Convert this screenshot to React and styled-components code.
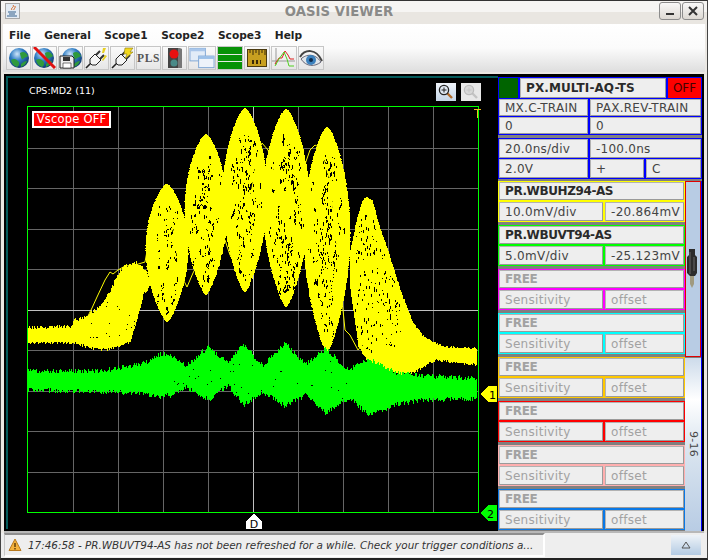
import React from 'react';
import styled, { createGlobalStyle } from 'styled-components';

const Global = createGlobalStyle`
  html, body { margin: 0; padding: 0; background: #2a2a2a; }
  * { box-sizing: border-box; }
  body { font-family: "DejaVu Sans", sans-serif; }
`;

/* ---------- waveform generation ---------- */
function rng(seed) {
  let a = seed;
  return () => {
    a |= 0; a = (a + 0x6d2b79f5) | 0;
    let t = Math.imul(a ^ (a >>> 15), 1 | a);
    t = (t + Math.imul(t ^ (t >>> 7), 61 | t)) ^ t;
    return ((t ^ (t >>> 14)) >>> 0) / 4294967296;
  };
}
const r = rng(4242);
const lerp = (pts, x) => {
  for (let i = 0; i < pts.length - 1; i++) {
    const [a, b] = [pts[i], pts[i + 1]];
    if (x >= a[0] && x <= b[0]) return a[1] + ((b[1] - a[1]) * (x - a[0])) / (b[0] - a[0] || 1);
  }
  return pts[pts.length - 1][1];
};
const lenses = [
  [167, 184, 322, 21, 34],
  [206, 134, 295, 21, 60],
  [245, 108, 292, 22, 75],
  [286, 109, 307, 23, 95],
  [327, 127, 352, 23, 95],
];
const lensWidth = (t, hw) => hw * Math.pow(Math.sin(Math.PI * Math.pow(t, 0.92)), 0.74);
let yellow = '';
let holes = '';
lenses.forEach(([cx, top, bottom, hw, n]) => {
  const H = bottom - top;
  for (let y = top; y < bottom; y++) {
    const t = (y - top + 0.5) / H;
    const w = lensWidth(t, hw);
    const l = Math.round(cx - w - r() * 0.8);
    const rr = Math.round(cx + w + r() * 0.8);
    yellow += `M${l} ${y + 0.5}H${rr}`;
  }
  for (let i = 0; i < n; i++) {
    const t = 0.12 + r() * 0.78;
    const w = lensWidth(t, hw);
    const s = (r() + r() - 1) * 0.85;
    const x = Math.round(cx + s * w);
    const y = Math.round(top + t * H);
    for (let j = 0; j < 3; j++) {
      holes += `M${x + Math.round((r() - 0.5) * 3) + 0.5} ${y + Math.round(r() * 9)}v${1 + Math.floor(r() * 3)}`;
    }
  }
});
const envelope = (tops, bottoms, x0, x1, jt, jb, rand) => {
  let d = '';
  for (let x = x0; x <= x1; x++) {
    const a = lerp(tops, x) + (rand() - 0.5) * jt;
    const b = lerp(bottoms, x) + (rand() - 0.5) * jb;
    d += `M${x + 0.5} ${Math.round(a)}V${Math.round(b)}`;
  }
  return d;
};
yellow += envelope(
  [[28, 328], [70, 326], [75, 320], [85, 317], [100, 307], [110, 290], [120, 270], [128, 264], [138, 263], [146, 270], [150, 285]],
  [[28, 343], [75, 343], [90, 348], [105, 350], [130, 342], [138, 315], [143, 295], [150, 285]],
  28, 150, 4, 3, r
);
yellow += envelope(
  [[350, 250], [357, 217], [362, 200], [367, 197], [372, 200], [378, 222], [393, 267], [400, 290], [413, 323], [422, 335], [432, 342], [445, 347], [476, 348]],
  [[350, 290], [358, 347], [370, 365], [400, 375], [415, 372], [425, 366], [435, 360], [476, 365]],
  350, 476, 2, 2.5, r
);
for (let i = 0; i < 170; i++) {
  const x = 355 + Math.round(r() * 45);
  const a = lerp([[350, 250], [362, 205], [372, 205], [393, 270], [413, 325]], x) + 8;
  const y = Math.round(a + r() * (350 - a));
  holes += `M${x + 0.5} ${y}v${1 + Math.floor(r() * 3)}`;
}
for (let i = 0; i < 26; i++) {
  const x = 90 + Math.round(r() * 45);
  const y = 300 + Math.round(r() * 40);
  if (x < 125 || y < 330) holes += `M${x + 0.5} ${y}v1`;
}
const gTop = [[28, 371], [100, 371], [140, 364], [150, 361], [160, 354], [172, 356], [185, 366], [208, 347], [228, 363], [243, 344], [262, 366], [285, 343], [305, 364], [325, 349], [349, 370], [368, 358], [395, 372], [420, 376], [476, 378]];
const gBot = [[28, 390], [100, 392], [140, 393], [160, 397], [172, 395], [185, 387], [208, 400], [228, 386], [243, 405], [262, 392], [285, 406], [305, 395], [325, 413], [349, 398], [368, 415], [395, 405], [420, 400], [476, 399]];
const green = envelope(gTop, gBot, 28, 476, 5, 5, r);
let greenHoles = '';
for (let i = 0; i < 40; i++) {
  const x = 170 + Math.round(r() * 180);
  const y = 360 + Math.round(r() * 40);
  greenHoles += `M${x + 0.5} ${y}v1`;
}
const trace = '87,318 92,308 97,297 105,280 110,272 113,274 118,270 125,266 135,265 145,262 150,235 155,217 160,210 168,205 175,240 180,273 187,287 193,273 205,250 225,240 230,255 235,262 245,230 258,152 262,143 268,150 280,190 303,170 310,150 315,145 320,148 330,180 345,330 350,335 358,350 375,330';

/* ---------- window chrome ---------- */
const Window = styled.div`
  width: 708px;
  height: 560px;
  display: flex;
  flex-direction: column;
  overflow: hidden;
  background: #ebe8e3;
  border-top: 1px solid #333;
  border-bottom: 2px solid #222;
  border-left: 1px solid #444;
  border-right: 1px solid #444;
`;
const TitleBar = styled.div`
  height: 23px;
  flex: none;
  display: flex;
  align-items: center;
  padding: 0 3px 3px 4px;
  background: linear-gradient(#f6f5f3 0 11px, #e9e6e1 11px);
`;
const JavaBadge = styled.div`
  width: 15px;
  height: 16px;
  flex: none;
  border: 1px solid #a9a9a9;
  background: #e4ecf4;
  display: flex;
  align-items: center;
  justify-content: center;
`;
const Title = styled.div`
  flex: 1;
  text-align: center;
  font: bold 13.2px "DejaVu Sans", sans-serif;
  letter-spacing: 0.1px;
  color: #8a8a88;
`;
const WinButton = styled.div`
  width: 22px;
  height: 18px;
  margin-left: 1px;
  flex: none;
  border: 1px solid #8c8c8c;
  border-radius: 3px;
  background: linear-gradient(#f8f8f8, #ddd9d3);
  display: flex;
  align-items: center;
  justify-content: center;
`;
const ChromeBand = styled.div`
  flex: none;
  margin: 0 2px;
  background: linear-gradient(#ffffff 0, #fbfbfb 24px, #dedede 48px);
`;
const MenuBar = styled.div`
  height: 22px;
  display: flex;
  align-items: center;
  gap: 13.5px;
  padding-left: 6px;
`;
const MenuItem = styled.span`
  font: bold 10.6px "DejaVu Sans", sans-serif;
  color: #222;
`;
const ToolBar = styled.div`
  height: 26px;
  display: flex;
  padding: 0 0 2px 2px;
  gap: 1px;
`;
const ToolButton = styled.div`
  width: ${(p) => p.$w || 25}px;
  height: 24px;
  flex: none;
  border: 1px solid #c6c6c6;
  background: linear-gradient(#fafafa, #e6e6e6);
  display: flex;
  align-items: center;
  justify-content: center;
`;
const PlsText = styled.span`
  font: bold 11.5px "Liberation Serif", serif;
  letter-spacing: 0.6px;
  color: #555;
`;
const BarsStack = styled.div`
  width: 100%;
  height: 100%;
  display: flex;
  flex-direction: column;
  gap: 1px;
  background: #e8e8e8;
`;
const GreenBar = styled.div`
  flex: 1;
  background: #079207;
`;

/* ---------- main area ---------- */
const Main = styled.div`
  flex: 1;
  min-height: 0;
  margin: 2px 3px 0;
  display: flex;
  background: #000;
  border-bottom: 2px solid #b8b8b8;
`;
const Scope = styled.div`
  width: 494px;
  flex: none;
  padding: 2px 0 2px 2px;
  background: #000;
`;
const ScopeFrame = styled.div`
  position: relative;
  height: 100%;
  border-top: 2px solid #045a5a;
  border-left: 2px solid #045a5a;
`;
const ScopeSvg = styled.svg`
  display: block;
  width: 490px;
  height: 453px;
`;
const ScopeLabel = styled.div`
  position: absolute;
  left: 21px;
  top: 7px;
  font: 9.5px "DejaVu Sans", sans-serif;
  color: #fff;
`;
const VscopeBadge = styled.div`
  position: absolute;
  left: 24px;
  top: 33px;
  width: 79px;
  height: 17px;
  border: 2px solid #fff;
  background: #f00;
  color: #fff;
  font: 11.5px "DejaVu Sans", sans-serif;
  letter-spacing: 0.2px;
  line-height: 13px;
  text-align: center;
  white-space: nowrap;
`;
const ZoomButton = styled.div`
  position: absolute;
  top: 5px;
  left: ${(p) => p.$x}px;
  width: 20px;
  height: 18px;
  background: ${(p) => (p.$off ? '#e8e8e8' : 'linear-gradient(#eef3f9, #c5d5e8)')};
  display: flex;
  align-items: center;
  justify-content: center;
`;

/* ---------- side panel ---------- */
const Side = styled.div`
  width: 206px;
  flex: none;
  padding: 3px 2px 0 0;
  background: #000;
  overflow: hidden;
  display: flex;
  flex-direction: column;
`;
const Stack = styled.div`
  flex: 1;
  min-height: 0;
  overflow: hidden;
  display: flex;
  flex-direction: column;
  background: #808080;
`;
const BlueGroup = styled.div`
  flex: none;
  display: flex;
  flex-direction: column;
  gap: 1px;
  padding: 1px;
  background: #0000ff;
  margin-bottom: ${(p) => p.$mb || 0}px;
`;
const Row = styled.div`
  display: flex;
  gap: ${(p) => p.$gap ?? 2}px;
`;
const Cell = styled.div`
  width: ${(p) => (p.$w ? `${p.$w}px` : 'auto')};
  flex: ${(p) => (p.$w ? 'none' : 1)};
  height: ${(p) => p.$h || 18}px;
  padding-left: ${(p) => p.$pl || 5}px;
  display: flex;
  align-items: center;
  white-space: nowrap;
  overflow: hidden;
  border: 1px solid #b2b2b2;
  border-bottom-color: #9a9a9a;
  border-right-color: #9a9a9a;
  background: #eeeeee;
  font: ${(p) => (p.$bold ? 'bold' : 'normal')} 12px "DejaVu Sans", sans-serif;
  letter-spacing: ${(p) => p.$ls ?? 0.25}px;
  color: ${(p) => (p.$muted ? '#a2a2a2' : p.$bold ? '#2a2a2a' : '#444')};
`;
const StatusLed = styled.div`
  width: 19px;
  height: 20px;
  flex: none;
  background: #006400;
`;
const OffCell = styled.div`
  flex: 1;
  height: 20px;
  background: #f00;
  color: #400;
  font: 12px "DejaVu Sans", sans-serif;
  display: flex;
  align-items: center;
  justify-content: center;
`;
const ChannelArea = styled.div`
  flex: 1;
  min-height: 0;
  display: flex;
  margin-top: 2px;
  border-right: 1px solid #0000ff;
`;
const ChannelList = styled.div`
  width: 187px;
  flex: none;
  display: flex;
  flex-direction: column;
  gap: 3px;
  overflow: hidden;
`;
const Channel = styled.div`
  flex: none;
  height: 41px;
  padding: 1px 1px 1px 1px;
  display: flex;
  flex-direction: column;
  gap: 2px;
  background: ${(p) => p.$c};
`;
const Slider = styled.div`
  position: relative;
  flex: 1;
  display: flex;
  flex-direction: column;
`;
const Thumb = styled.div`
  height: 176px;
  flex: none;
  border: 1px solid #e00000;
  background: #b8cce4;
`;
const Track = styled.div`
  flex: 1;
  margin-top: 1px;
  background: linear-gradient(#cddbea 0, #ffffff 24%, #dce6f0 50%, #b8cce4 100%);
  display: flex;
  align-items: center;
  justify-content: center;
`;
const TrackLabel = styled.span`
  writing-mode: vertical-rl;
  font: 11px "DejaVu Sans", sans-serif;
  letter-spacing: 0.3px;
  color: #444;
`;
const Jack = styled.svg`
  position: absolute;
  left: 2px;
  top: 68px;
`;

/* ---------- status bar ---------- */
const StatusBar = styled.div`
  height: 25px;
  flex: none;
  display: flex;
  align-items: center;
  justify-content: space-between;
  padding: 0 6px 1px 3px;
  background: #eeeeee;
`;
const Message = styled.div`
  width: 541px;
  height: 24px;
  display: flex;
  align-items: center;
  gap: 6px;
  padding-left: 3px;
  border-top: 2px solid #8e8e8e;
  border-left: 1px solid #c8c8c8;
  border-right: 2px solid #fff;
  border-bottom: 2px solid #fff;
  font: italic 10.4px "DejaVu Sans", sans-serif;
  color: #333;
  white-space: nowrap;
  overflow: hidden;
  svg { flex: none; }
`;
const UpButton = styled.div`
  width: 30px;
  height: 20px;
  background: linear-gradient(#eef3f8, #b4cbe3);
  display: flex;
  align-items: center;
  justify-content: center;
`;

/* ---------- icons ---------- */
const GlobeDefs = () => (
  <defs>
    <radialGradient id="glb" cx="40%" cy="30%" r="75%">
      <stop offset="0" stopColor="#cfe6fa" />
      <stop offset="0.45" stopColor="#2f7dc4" />
      <stop offset="1" stopColor="#0b2f66" />
    </radialGradient>
  </defs>
);
const GlobeShape = () => (
  <>
    <circle cx="11" cy="11" r="10" fill="url(#glb)" />
    <path d="M3 13c3-2 5-1 7 1s1 5-1 6c-3-1-5-3-6-7zM12 6c3-2 6-1 8 3-2 2-4 1-5 3s-3-4-3-6zM13 17c2-2 4-3 6-3-1 3-3 5-6 6z" fill="#2f9a3c" />
  </>
);
const Globe = () => (
  <svg width="22" height="22" viewBox="0 0 22 22"><GlobeShape /></svg>
);
const GlobeOff = () => (
  <svg width="23" height="22" viewBox="0 0 23 22">
    <GlobeShape />
    <path d="M1 0L22 21" stroke="#e01010" strokeWidth="3" />
  </svg>
);
const GlobeSave = () => (
  <svg width="23" height="22" viewBox="0 0 23 22">
    <g transform="translate(2 0)"><GlobeShape /></g>
    <path d="M1 9h12l2 2v10H1z" fill="#eee" stroke="#222" />
    <path d="M4 10h7v4H4z" fill="#333" /><path d="M4 16h8v5H4z" fill="#fff" stroke="#222" strokeWidth=".6" />
  </svg>
);
const Plug = ({ bolt }) => (
  <svg width="23" height="22" viewBox="0 0 23 22">
    <path d="M1 21l5-5" stroke="#222" strokeWidth="1.6" />
    <path d="M11 8l4-4M15 12l4-4" stroke="#333" strokeWidth="2" />
    <path d="M5 12l5-5 6 6-5 5H7l-2-2z" fill="#f4f4f4" stroke="#222" />
    {bolt ? (
      <path d="M14 1h8l-3 4h3l-8 7 2-5h-3z" fill="#f2d81c" stroke="#8a7a10" strokeWidth=".6" />
    ) : (
      <path d="M18 1h3l-2 5h-2zM20 8l2 1-4 5-1-1z" fill="#e8d020" />
    )}
  </svg>
);
const Traffic = () => (
  <svg width="20" height="22" viewBox="0 0 20 22">
    <path d="M3 1h10l4 1v19H3z" fill="#444" />
    <path d="M13 1l4 1v19h-4z" fill="#777" />
    <circle cx="9" cy="7" r="4.5" fill="#e81010" />
    <circle cx="9" cy="16" r="3.5" fill="#4a8a88" />
  </svg>
);
const Windows = () => (
  <svg width="27" height="22" viewBox="0 0 27 22">
    <rect x="1" y="1" width="16" height="13" fill="#e2ecf8" stroke="#7fa6d4" />
    <rect x="1" y="1" width="16" height="3" fill="#a9c6ea" />
    <rect x="10" y="9" width="16" height="12" fill="#eef3fa" stroke="#7fa6d4" />
    <rect x="10" y="9" width="16" height="3" fill="#9cc0e8" />
  </svg>
);
const Ruler = () => (
  <svg width="20" height="18" viewBox="0 0 20 18">
    <rect x=".5" y=".5" width="19" height="17" fill="#c8a020" stroke="#4a3a10" />
    <path d="M3 1v3M6 1v5M9 1v3M12 1v5M15 1v3M18 1v5" stroke="#3a2a08" />
    <path d="M5 11h2v4H5zM9 11h2v4H9zM13 11h1v4h-1z" fill="#3a2a08" />
  </svg>
);
const ChartIcon = () => (
  <svg width="24" height="22" viewBox="0 0 24 22">
    <path d="M4 1v17M0 14h23" stroke="#999" />
    <path d="M3 17l4-6h3l3-7 3 4 2 4h4" stroke="#e02020" fill="none" />
    <path d="M3 19l4-7 5-7 3 7 2 7h5" stroke="#50d020" fill="none" />
  </svg>
);
const Eye = () => (
  <svg width="24" height="20" viewBox="0 0 24 20">
    <path d="M1 9C6 1 17 0 23 13" fill="none" stroke="#444" strokeWidth="2" />
    <path d="M2 11c5-5 14-6 20 3-6 5-15 5-20-3z" fill="#dfe5ea" stroke="#667" />
    <circle cx="12" cy="12" r="5" fill="#3d82be" />
    <circle cx="12" cy="12" r="2" fill="#102a4a" />
  </svg>
);
const Magnifier = ({ off }) => (
  <svg width="16" height="16" viewBox="0 0 16 16">
    <path d="M9 9l5 5" stroke={off ? '#c4c4c4' : '#b06a28'} strokeWidth="2.4" />
    <circle cx="6" cy="6" r="4.6" fill={off ? '#d8d8d8' : '#dfe8f2'} stroke={off ? '#bcbcbc' : '#222'} strokeWidth="1.3" />
    <path d="M3.5 6h5M6 3.5v5" stroke={off ? '#c4c4c4' : '#222'} />
  </svg>
);
const JavaCup = () => (
  <svg width="13" height="14" viewBox="0 0 13 14">
    <path d="M7 1c2 2-3 3-1 5M9 2c1 2-2 3-1 4" stroke="#d8641c" fill="none" />
    <path d="M2 8h8M3 10h6M1 12h10" stroke="#35608c" />
  </svg>
);
const Warn = () => (
  <svg width="14" height="14" viewBox="0 0 14 14">
    <path d="M7 1l6 11.5H1z" fill="#f4b23c" stroke="#b87a20" />
    <path d="M7 5v4M7 10v1.4" stroke="#5a3a08" strokeWidth="1.4" />
  </svg>
);

/* ---------- plot ---------- */
const vLines = [73, 118, 163, 208, 253, 298, 343, 388, 433];
const hLines = [148, 188, 229, 269, 310, 350, 391, 431, 472];
const Plot = () => (
  <ScopeSvg viewBox="8 78 490 453" shapeRendering="crispEdges">
    {vLines.map((x) => (
      <path key={x} d={`M${x + 0.5} 106V512`} stroke={x === 253 ? '#c0c0c0' : '#666'} />
    ))}
    {hLines.map((y) => (
      <path key={y} d={`M27 ${y + 0.5}H478`} stroke={y === 310 ? '#c0c0c0' : '#666'} />
    ))}
    <path d={yellow} stroke="#ffff00" fill="none" />
    <path d={holes} stroke="#000" fill="none" />
    <polyline points={trace} fill="none" stroke="#ffff00" shapeRendering="auto" />
    <path d={green} stroke="#00ff00" fill="none" />
    <path d={greenHoles} stroke="#000" fill="none" />
    <rect x="27.5" y="106.5" width="451" height="406" fill="none" stroke="#00ff00" />
    <path d="M474 109.5H481M477.5 109V118" stroke="#f0c020" />
    <path d="M481 394l7-8h9v16h-9z" fill="#ffff00" />
    <text x="489" y="399" fontSize="11" fill="#000" fontFamily="DejaVu Sans" shapeRendering="auto">1</text>
    <path d="M481 513l7-8h9v16h-9z" fill="#00ff00" />
    <text x="487" y="518" fontSize="11" fill="#000" fontFamily="DejaVu Sans" shapeRendering="auto">2</text>
    <path d="M246 529v-8l8-7 8 7v8z" fill="#fff" />
    <text x="254" y="528" textAnchor="middle" fontSize="11" fill="#000" fontFamily="DejaVu Sans" shapeRendering="auto">D</text>
  </ScopeSvg>
);

const channels = [
  { c: '#ffff00', name: 'PR.WBUHZ94-AS', a: '10.0mV/div', b: '-20.864mV' },
  { c: '#00ff00', name: 'PR.WBUVT94-AS', a: '5.0mV/div', b: '-25.123mV' },
  { c: '#ff00ff' },
  { c: '#00ffff' },
  { c: '#ffc800' },
  { c: '#ff0000' },
  { c: '#ffafaf' },
  { c: '#0a78e6' },
];
const menus = ['File', 'General', 'Scope1', 'Scope2', 'Scope3', 'Help'];

export default function App() {
  return (
    <Window>
      <Global />
      <TitleBar>
        <JavaBadge><JavaCup /></JavaBadge>
        <Title>OASIS VIEWER</Title>
        <WinButton>
          <svg width="10" height="10" viewBox="0 0 10 10"><path d="M1 8h8" stroke="#333" strokeWidth="2" /></svg>
        </WinButton>
        <WinButton>
          <svg width="10" height="10" viewBox="0 0 10 10"><path d="M1 1l8 8M9 1L1 9" stroke="#333" strokeWidth="2" /></svg>
        </WinButton>
      </TitleBar>
      <ChromeBand>
        <MenuBar>
          {menus.map((m) => <MenuItem key={m}>{m}</MenuItem>)}
        </MenuBar>
        <ToolBar>
          <svg width="0" height="0"><GlobeDefs /></svg>
          <ToolButton><Globe /></ToolButton>
          <ToolButton><GlobeOff /></ToolButton>
          <ToolButton><GlobeSave /></ToolButton>
          <ToolButton><Plug /></ToolButton>
          <ToolButton><Plug bolt /></ToolButton>
          <ToolButton><PlsText>PLS</PlsText></ToolButton>
          <ToolButton><Traffic /></ToolButton>
          <ToolButton $w={28}><Windows /></ToolButton>
          <ToolButton $w={26}>
            <BarsStack><GreenBar /><GreenBar /><GreenBar /></BarsStack>
          </ToolButton>
          <ToolButton $w={26}><Ruler /></ToolButton>
          <ToolButton $w={26}><ChartIcon /></ToolButton>
          <ToolButton $w={26}><Eye /></ToolButton>
        </ToolBar>
      </ChromeBand>
      <Main>
        <Scope>
          <ScopeFrame>
            <Plot />
            <ScopeLabel>CPS:MD2 (11)</ScopeLabel>
            <VscopeBadge>Vscope OFF</VscopeBadge>
            <ZoomButton $x={428}><Magnifier /></ZoomButton>
            <ZoomButton $x={453} $off><Magnifier off /></ZoomButton>
          </ScopeFrame>
        </Scope>
        <Side>
          <Stack>
            <BlueGroup $mb={3}>
              <Row $gap={2}>
                <StatusLed />
                <Cell $w={146} $h={20} $bold $pl={5} $ls={0.1}>PX.MULTI-AQ-TS</Cell>
                <OffCell>OFF</OffCell>
              </Row>
              <Row>
                <Cell $w={89} $h={17}>MX.C-TRAIN</Cell>
                <Cell $h={17}>PAX.REV-TRAIN</Cell>
              </Row>
              <Row>
                <Cell $w={89} $h={17}>0</Cell>
                <Cell $h={17}>0</Cell>
              </Row>
            </BlueGroup>
            <BlueGroup>
              <Row>
                <Cell $w={89} $h={19}>20.0ns/div</Cell>
                <Cell $h={19}>-100.0ns</Cell>
              </Row>
              <Row>
                <Cell $w={89} $h={19}>2.0V</Cell>
                <Cell $w={54} $h={19}>+</Cell>
                <Cell $h={19}>C</Cell>
              </Row>
            </BlueGroup>
            <ChannelArea>
              <ChannelList>
                {channels.map((ch) => (
                  <Channel key={ch.c} $c={ch.c}>
                    <Cell $h={18} $bold={true} $muted={!ch.name} $ls={-0.4}>{ch.name || 'FREE'}</Cell>
                    <Row>
                      <Cell $w={104} $h={19} $muted={!ch.name} $ls={0.3}>{ch.a || 'Sensitivity'}</Cell>
                      <Cell $h={19} $muted={!ch.name} $ls={0.3}>{ch.b || 'offset'}</Cell>
                    </Row>
                  </Channel>
                ))}
              </ChannelList>
              <Slider>
                <Thumb />
                <Track><TrackLabel>9-16</TrackLabel></Track>
                <Jack width="10" height="39" viewBox="0 0 10 39">
                  <path d="M2 0h6v6l2 2v16l-2 3H3l-3-3V8l2-2z" fill="#2c2c2c" />
                  <path d="M3 3v22M7 8v14" stroke="#666" />
                  <path d="M3 27h4v8l-2 4-2-4z" fill="#a09a80" />
                </Jack>
              </Slider>
            </ChannelArea>
          </Stack>
        </Side>
      </Main>
      <StatusBar>
        <Message>
          <Warn />
          <span>17:46:58 - PR.WBUVT94-AS has not been refreshed for a while. Check your trigger conditions a...</span>
        </Message>
        <UpButton>
          <svg width="10" height="8" viewBox="0 0 10 8"><path d="M5 1L1 7h8z" fill="none" stroke="#555" /></svg>
        </UpButton>
      </StatusBar>
    </Window>
  );
}
